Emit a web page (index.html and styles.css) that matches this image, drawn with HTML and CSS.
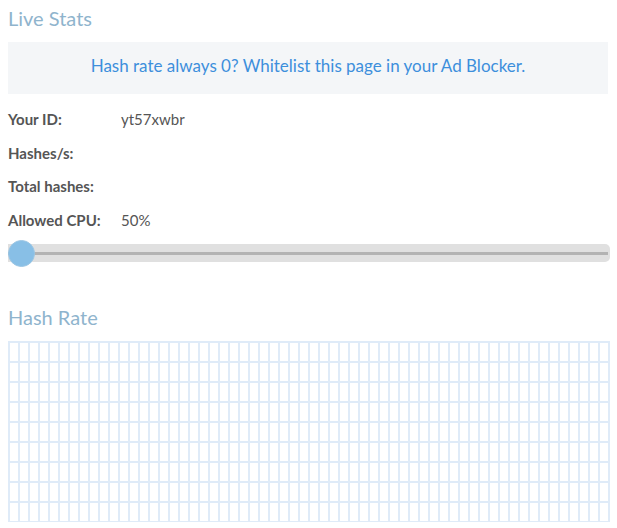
FILE: index.html
```html
<!DOCTYPE html>
<html>
<head>
<meta charset="utf-8">
<link rel="stylesheet" href="styles.css">
</head>
<body>
<div class="page">
  <h2 class="title">Live Stats</h2>
  <div class="notice">Hash rate always 0? Whitelist this page in your Ad Blocker.</div>
  <div class="stats">
    <div class="row"><span class="label">Your ID:</span><span class="value">yt57xwbr</span></div>
    <div class="row"><span class="label">Hashes/s:</span><span class="value"></span></div>
    <div class="row"><span class="label">Total hashes:</span><span class="value"></span></div>
    <div class="row"><span class="label">Allowed CPU:</span><span class="value">50%</span></div>
  </div>
  <div class="slider">
    <div class="track"><div class="line"></div></div>
    <div class="thumb"></div>
  </div>
  <h2 class="title title-rate">Hash Rate</h2>
  <div class="chart"></div>
</div>
</body>
</html>
```
FILE: styles.css
```css
html, body {
  margin: 0;
  padding: 0;
  background: #ffffff;
}
body {
  font-family: Lato, "Open Sans", sans-serif;
}
.page {
  padding: 6px 8px 0 8px;
  width: 602px;
}
.title {
  margin: 0;
  font-size: 20px;
  line-height: 24px;
  font-weight: 400;
  color: #8fb4cd;
}
.notice {
  margin-top: 12px;
  width: 600px;
  padding: 14px 0 18px 0;
  line-height: 20px;
  font-size: 17px;
  text-align: center;
  color: #3d8fdc;
  background: #f4f6f8;
}
.stats {
  margin-top: 9px;
}
.row {
  display: grid;
  grid-template-columns: 113px 1fr;
  height: 33.5px;
  line-height: 33.5px;
  font-size: 15px;
  color: #555555;
}
.label {
  font-weight: 700;
}
.slider {
  position: relative;
  margin-top: 7px;
  height: 18px;
  width: 602px;
}
.track {
  height: 18px;
  background: #e0e0e0;
  border-radius: 0 5px 5px 0;
  display: flex;
  align-items: center;
}
.line {
  width: 600px;
  height: 3px;
  background: #b3b3b3;
}
.thumb {
  position: absolute;
  left: 0;
  top: -4px;
  width: 27px;
  height: 27px;
  border-radius: 50%;
  background: #88bfe6;
  box-sizing: border-box;
  border: 1px solid #9cc6e4;
}
.title-rate {
  margin-top: 43px;
}
.chart {
  margin-top: 12px;
  width: 602px;
  height: 181px;
  background-image:
    linear-gradient(to right, #dfebf8 2px, transparent 2px),
    linear-gradient(to bottom, #dfebf8 2px, transparent 2px);
  background-size: 10px 100%, 100% 20px;
}
```
